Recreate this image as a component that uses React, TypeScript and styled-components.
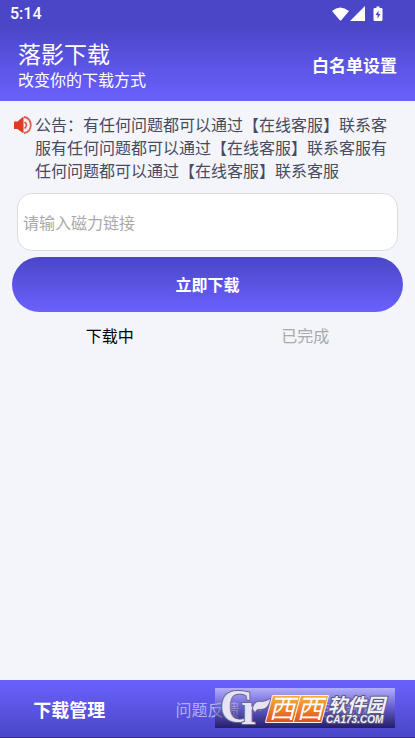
import React from "react";
import styled, { createGlobalStyle } from "styled-components";

const GlobalStyle = createGlobalStyle`
  *, *::before, *::after { box-sizing: border-box; }
  body { margin: 0; background: #f4f5fb; font-family: "Noto Sans CJK SC", sans-serif; }
  button, input { font: inherit; }
  h1, p { margin: 0; font-weight: 400; }
`;

const Screen = styled.div`
  min-height: 100vh;
  display: flex;
  flex-direction: column;
`;

const Header = styled.header`
  color: #fff;
  background: linear-gradient(#4a46c7 25%, #6a61fd);
`;

const StatusBar = styled.div`
  height: 28px;
  padding: 0 31px 0 10px;
  display: flex;
  align-items: center;
  justify-content: space-between;
  font: 500 16px/28px Roboto, sans-serif;
`;

const StatusIcons = styled.svg`
  display: block;
  width: 54px;
  height: 16px;
`;

const TitleBar = styled.div`
  height: 73px;
  padding: 10px 18px;
  display: flex;
  align-items: center;
  justify-content: space-between;
`;

const AppTitle = styled.h1`
  font-size: 23px;
  line-height: 28px;
`;

const Subtitle = styled.p`
  font-size: 16px;
  line-height: 24px;
`;

const HeaderButton = styled.button`
  border: 0;
  padding: 0;
  background: none;
  color: inherit;
  font-size: 17px;
  line-height: 24px;
  font-weight: 700;
`;

const Main = styled.main`
  flex: 1;
  padding: 12px 12px 0;
`;

const Notice = styled.section`
  display: flex;
  gap: 2px;
  padding: 0 12px 0 1px;
  font-size: 16px;
  line-height: 23px;
  color: #484b5f;
`;

const SpeakerIcon = styled.svg`
  flex: none;
  width: 20px;
  height: 23px;
`;

const LinkInput = styled.input`
  display: block;
  width: calc(100% - 10px);
  height: 58px;
  margin: 11px 5px 6px;
  padding: 0 5px;
  border: 1px solid #dcdddd;
  border-radius: 15px;
  background: #fff;
  color: #484b5f;
  font-size: 16px;
  &::placeholder { color: #a9a9a9; opacity: 1; }
`;

const DownloadButton = styled.button`
  display: block;
  width: 100%;
  height: 55px;
  border: 0;
  padding: 0 0 2px;
  border-radius: 28px;
  background: linear-gradient(#4a46c7, #6a61fd);
  color: #fff;
  font-size: 16px;
  font-weight: 700;
`;

const Tabs = styled.div`
  display: grid;
  grid-template-columns: 1fr 1fr;
  height: 47px;
`;

const Tab = styled.button<{ $active?: boolean }>`
  border: 0;
  padding: 0 0 2px;
  background: none;
  color: ${(p) => (p.$active ? "#000" : "#a9a9a9")};
  font-size: 16px;
`;

const BottomNav = styled.nav`
  position: relative;
  height: 58px;
  display: grid;
  grid-template-columns: repeat(3, 1fr);
  background: linear-gradient(#6a61fd, #4a46c7);
  border-bottom: 1px solid #35345f;
`;

const NavItem = styled.button<{ $active?: boolean }>`
  border: 0;
  padding: 0;
  background: none;
  color: ${(p) => (p.$active ? "#fff" : "#b3aff0")};
  font-size: ${(p) => (p.$active ? 18 : 16)}px;
  font-weight: ${(p) => (p.$active ? 700 : 400)};
`;

const Watermark = styled.div`
  position: absolute;
  right: 20px;
  bottom: 9px;
  width: 180px;
  height: 40px;
  background: linear-gradient(rgba(255, 255, 255, 0.5), rgba(130, 120, 190, 0.4) 45%, rgba(15, 8, 50, 0.65));
  pointer-events: none;
  svg { display: block; }
`;

function SiteLogo() {
  return (
    <svg width="180" height="40" viewBox="0 0 180 40" strokeLinejoin="round" paintOrder="stroke">
      <defs>
        <linearGradient id="orange" x1="0" y1="0" x2="0" y2="1">
          <stop offset="0" stopColor="#f6b23c" />
          <stop offset="1" stopColor="#e2521f" />
        </linearGradient>
      </defs>
      <g fontFamily="Liberation Serif, serif" fill="#e6e4f3" stroke="#69658c" strokeWidth="2">
        <text x="5" y="34" fontSize="46" fontWeight="700">C</text>
        <text x="26" y="36" fontSize="46" fontWeight="700">r</text>
        <path d="M38 21C39 14 43 13 47 14Q51 14 55 11C54 17 51 21 46 21Q42 20 40 24Z" />
      </g>
      <g fill="url(#orange)" stroke="#f7eef2" strokeWidth="2">
        <path d="M58 8H85L78 34H51Z" />
        <path d="M86 8H113L106 34H79Z" />
      </g>
      <g fontFamily="Noto Sans CJK SC, sans-serif" fontStyle="italic" fontWeight="700" fill="#fff">
        <text x="54" y="30" fontSize="26" fontWeight="400">西</text>
        <text x="82" y="30" fontSize="26" fontWeight="400">西</text>
        <g stroke="#5c5880" strokeWidth="2" fill="#f1f0f8">
          <text x="113" y="24" fontSize="19">软件园</text>
          <text x="111" y="35" fontSize="10" fontFamily="Liberation Sans, sans-serif">CA173.COM</text>
        </g>
      </g>
    </svg>
  );
}

export default function App() {
  return (
    <Screen>
      <GlobalStyle />
      <Header>
        <StatusBar>
          <span>5:14</span>
          <StatusIcons viewBox="0 0 54 16" fill="#fff" aria-label="Wi-Fi, signal, battery charging">
            <path d="M2 5Q10-2 19 5L11 14.500H10Z" />
            <path d="M35 0V15H20Z" />
            <path fillRule="evenodd" d="M45 2h1.500V.5h3V2H51q1.500 0 1.500 1v11q0 1-1.500 1h-6q-1.500 0-1.500-1V3q0-1 1.500-1Zm3.500 2.500-3 4.500h2v3.500l3-4.500h-2Z" />
          </StatusIcons>
        </StatusBar>
        <TitleBar>
          <div>
            <AppTitle>落影下载</AppTitle>
            <Subtitle>改变你的下载方式</Subtitle>
          </div>
          <HeaderButton type="button">白名单设置</HeaderButton>
        </TitleBar>
      </Header>
      <Main>
        <Notice>
          <SpeakerIcon viewBox="0 0 20 23" aria-hidden="true">
            <path d="M1 8.500H4.500L10.500 3.500V20.500L4.500 16H1Z" fill="#de3a24" />
            <path d="M11.500 9Q15.500 12 11.500 15.500M11 4C20 4.500 20 19.500 11 20" fill="none" stroke="#e0604c" strokeWidth="1.800" />
          </SpeakerIcon>
          <p>公告：有任何问题都可以通过【在线客服】联系客服有任何问题都可以通过【在线客服】联系客服有任何问题都可以通过【在线客服】联系客服</p>
        </Notice>
        <LinkInput type="text" aria-label="磁力链接" placeholder="请输入磁力链接" />
        <DownloadButton type="button">立即下载</DownloadButton>
        <Tabs role="tablist">
          <Tab type="button" role="tab" aria-selected="true" $active>下载中</Tab>
          <Tab type="button" role="tab" aria-selected="false">已完成</Tab>
        </Tabs>
      </Main>
      <BottomNav>
        <NavItem type="button" $active>下载管理</NavItem>
        <NavItem type="button">问题反馈</NavItem>
        <NavItem type="button">使用教程</NavItem>
        <Watermark>
          <SiteLogo />
        </Watermark>
      </BottomNav>
    </Screen>
  );
}
